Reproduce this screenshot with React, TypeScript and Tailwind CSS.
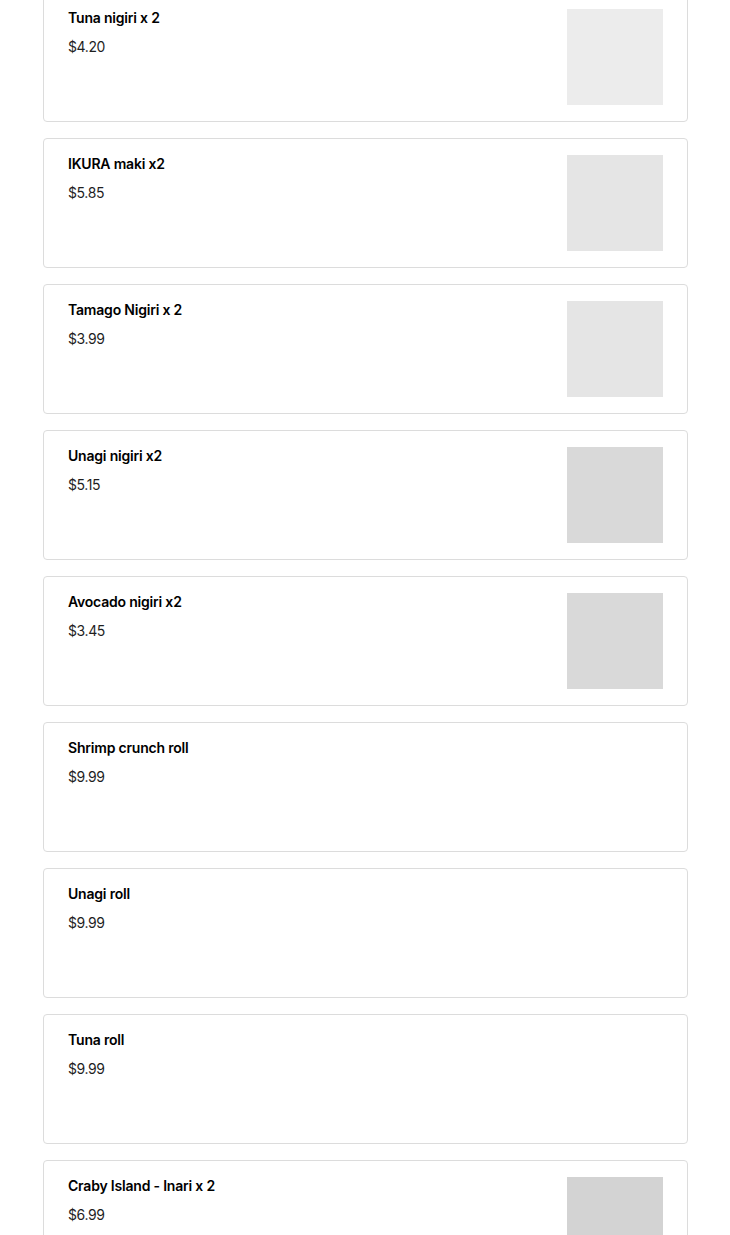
const items = [
  { name: 'Tuna nigiri x 2', price: '$4.20', img: 'bg-[#ececec]' },
  { name: 'IKURA maki x2', price: '$5.85', img: 'bg-[#e5e5e5]' },
  { name: 'Tamago Nigiri x 2', price: '$3.99', img: 'bg-[#e5e5e5]' },
  { name: 'Unagi nigiri x2', price: '$5.15', img: 'bg-[#d9d9d9]' },
  { name: 'Avocado nigiri x2', price: '$3.45', img: 'bg-[#d9d9d9]' },
  { name: 'Shrimp crunch roll', price: '$9.99', img: '' },
  { name: 'Unagi roll', price: '$9.99', img: '' },
  { name: 'Tuna roll', price: '$9.99', img: '' },
  { name: 'Craby Island - Inari x 2', price: '$6.99', img: 'bg-[#d3d3d3]' },
];

export default function App() {
  return (
    <div className="h-[1235px] overflow-hidden bg-white font-['Inter',sans-serif] text-[#111]">
      <div className="-mt-2 ml-[43px] flex w-[645px] flex-col gap-4">
        {items.map((item) => (
          <div
            key={item.name}
            className="flex h-[130px] shrink-0 justify-between rounded border border-[#dcdcdc] px-6 py-4"
          >
            <div className="flex flex-col gap-[13px] pt-px">
              <div className="text-[14px] font-semibold leading-4 tracking-[-0.2px] text-black">{item.name}</div>
              <div className="text-[14px] leading-4 tracking-[-0.4px] text-[#1f1f1f]">{item.price}</div>
            </div>
            {item.img && <div className={`h-24 w-24 shrink-0 ${item.img}`} />}
          </div>
        ))}
      </div>
    </div>
  );
}
